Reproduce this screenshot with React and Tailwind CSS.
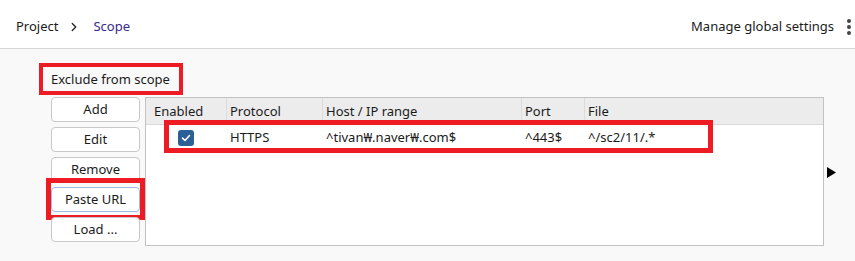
import { ChevronRight } from "lucide-react";

const columns = ["Enabled", "Protocol", "Host / IP range", "Port", "File"];
const buttons = ["Add", "Edit", "Remove", "Paste URL", "Load ..."];

export default function App() {
  return (
    <div className="h-[261px] w-[855px] flex flex-col bg-[#f9f9f9] text-[13px] text-[#1b1b1b] font-['Noto_Sans','Noto_Sans_CJK_KR',sans-serif] overflow-hidden">
      {/* top bar */}
      <div className="h-[49px] shrink-0 flex items-center justify-between bg-white border-b border-[#d6d6d6] pl-4 pr-[2px] pt-[5px]">
        <div className="flex items-center">
          <span>Project</span>
          <ChevronRight size={14} strokeWidth={2.2} className="ml-[9px] mr-[12px] text-[#222]" />
          <span className="text-[#35288f]">Scope</span>
        </div>
        <div className="flex items-center gap-[11px]">
          <span>Manage global settings</span>
          <div className="flex flex-col gap-[2px] px-[2px]">
            <span className="w-[4px] h-[4px] rounded-full bg-[#444]" />
            <span className="w-[4px] h-[4px] rounded-full bg-[#444]" />
            <span className="w-[4px] h-[4px] rounded-full bg-[#444]" />
          </div>
        </div>
      </div>

      {/* content */}
      <div className="pl-[51px] pt-[20px]">
        <div className="relative w-fit">
          <span className="block leading-[20px]">Exclude from scope</span>
          <div className="absolute -left-[12px] -top-[6px] w-[144px] h-[32px] border-4 border-[#ed1c24]" />
        </div>

        <div className="flex items-center mt-[8px]">
          <div className="flex flex-col gap-[5px] w-[89px] self-start">
            {buttons.map((b) => (
              <div key={b} className="relative">
                <button
                  className={
                    "w-full h-[25px] rounded-[4px] bg-white border text-center leading-[23px] " +
                    (b === "Paste URL" ? "border-[#9fbce3]" : "border-[#c8c8c8]")
                  }
                >
                  {b}
                </button>
                {b === "Paste URL" && (
                  <div className="absolute -left-[5px] -top-[9px] w-[99px] h-[42px] border-[5px] border-[#ed1c24]" />
                )}
              </div>
            ))}
          </div>

          <div className="relative ml-[5px] w-[679px] h-[149px] bg-white border border-[#c2c2c2]">
            <div className="grid grid-cols-[80px_96px_199px_63px_1fr] h-[27px] bg-[#ececec] border-b border-[#d9d9d9]">
              {columns.map((c, i) => (
                <div
                  key={c}
                  className={
                    "leading-[26px] " +
                    (i === 0 ? "pl-[8px]" : "pl-[3px] border-l border-[#dcdcdc]")
                  }
                >
                  {c}
                </div>
              ))}
            </div>
            <div className="grid grid-cols-[80px_96px_199px_63px_1fr] h-[26px] items-center">
              <div className="flex justify-center">
                <span className="w-[16px] h-[16px] rounded-[3px] bg-[#2c5f96] flex items-center justify-center">
                  <svg width="10" height="10" viewBox="0 0 10 10">
                    <path d="M1.5 5.2 L4 7.5 L8.5 2.5" fill="none" stroke="white" strokeWidth="1.6" strokeLinecap="round" strokeLinejoin="round" />
                  </svg>
                </span>
              </div>
              <div className="pl-[4px]">HTTPS</div>
              <div className="pl-[4px]">^tivan₩.naver₩.com$</div>
              <div className="pl-[4px]">^443$</div>
              <div className="pl-[4px]">^/sc2/11/.*</div>
            </div>
            <div className="absolute left-[18px] top-[22px] w-[549px] h-[33px] border-[5px] border-[#ed1c24]" />
          </div>

          <svg width="9" height="11" viewBox="0 0 9 11" className="ml-[3px] mt-[2px]">
            <path d="M0 0 L9 5.5 L0 11 Z" fill="#000" />
          </svg>
        </div>
      </div>
    </div>
  );
}
